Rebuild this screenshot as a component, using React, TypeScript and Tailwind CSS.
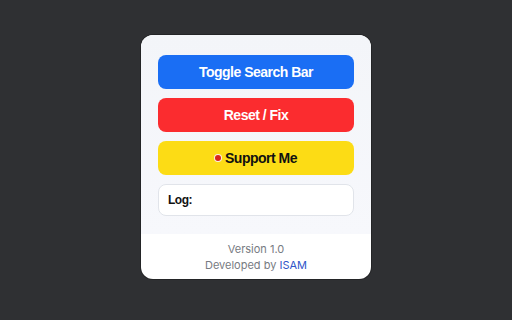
import React from "react";

const App: React.FC = () => {
    return (
        <div className="w-[512px] h-[320px] bg-[#2f3033] pt-[35px]" style={{fontFamily: "'Liberation Sans', Arial, sans-serif"}}>
            <div className="mx-auto w-[230px] h-[244px] rounded-[12px] overflow-hidden bg-white flex flex-col shadow-[0_0_0_1px_rgba(0,0,0,0.25)]">
                {/* Pulsanti */}
                <div className="flex flex-col gap-[9px] px-[17px] pt-[20px] pb-[18px] bg-gradient-to-b from-[#f3f5f9] to-[#f7f8fc]">
                    <button type="button" className="h-[34px] rounded-[8px] bg-[#1a6ef4] text-white font-bold text-[14px] tracking-[-0.5px]">
                        Toggle Search Bar
                    </button>
                    <button type="button" className="h-[34px] rounded-[8px] bg-[#fb2c2f] text-white font-bold text-[14px] tracking-[-0.5px]">
                        Reset / Fix
                    </button>
                    <button type="button" className="h-[34px] rounded-[8px] bg-[#fcdc15] text-[#111] font-bold text-[14px] tracking-[-0.5px] flex items-center justify-center gap-[4px]">
                        <span className="w-[6px] h-[6px] rounded-full bg-[#d9261c] ring-1 ring-[#f9f0e0]"></span>
                        Support Me
                    </button>
                    <div className="h-[32px] rounded-[8px] bg-white border border-[#e1e4ea] flex items-center px-[9px] text-[12px] tracking-[-0.5px] font-bold text-[#111]">
                        Log:
                    </div>
                </div>
                {/* Footer */}
                <div className="flex-1 flex flex-col items-center justify-center gap-[2px] text-[11px] text-[#777b82] leading-[14px]" style={{fontFamily: "Inter, sans-serif"}}>
                    <div>Version 1.0</div>
                    <div>Developed by <span className="text-[#2f55c8]">ISAM</span></div>
                </div>
            </div>
        </div>
    );
};

export default App;
